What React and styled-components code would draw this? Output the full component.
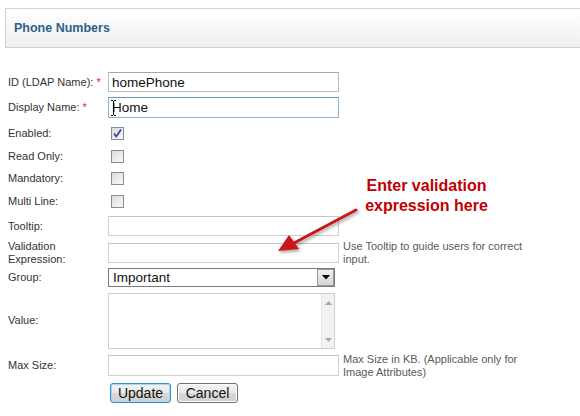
import React from 'react';
import styled, { createGlobalStyle } from 'styled-components';

const Global = createGlobalStyle`
  html, body { margin: 0; padding: 0; background: #fff; }
  body { font-family: "Liberation Sans", Arial, sans-serif; }
`;

function App() {
  return (
    <Page>
      <Global />
      <Header>
        <Title>Phone Numbers</Title>
      </Header>
      <Form>
        <Row $h={24}>
          <Label>ID (LDAP Name): <Req>*</Req></Label>
          <TextInput $w={231} $h={20} defaultValue="homePhone" $dark />
        </Row>
        <Row $h={27}>
          <Label>Display Name: <Req>*</Req></Label>
          <FieldWrap>
            <TextInput $w={231} $h={21} defaultValue="Home" $focus />
            <Cursor viewBox="0 0 5 16" width="5" height="16">
              <path d="M0 0.5h2M3 0.5h2M2.5 1v14M0 15.5h2M3 15.5h2" stroke="#000" strokeWidth="1" fill="none" />
            </Cursor>
          </FieldWrap>
        </Row>
        <Row $h={24}>
          <Label>Enabled:</Label>
          <Check $on>
            <svg viewBox="0 0 11 11" width="11" height="11">
              <path d="M2 5.5l2.3 3L9 1.5" stroke="#3a4f93" strokeWidth="1.8" fill="none" />
            </svg>
          </Check>
        </Row>
        <Row $h={22}>
          <Label>Read Only:</Label>
          <Check />
        </Row>
        <Row $h={23}>
          <Label>Mandatory:</Label>
          <Check />
        </Row>
        <Row $h={22}>
          <Label>Multi Line:</Label>
          <Check />
        </Row>
        <Row $h={28}>
          <Label>Tooltip:</Label>
          <TextInput $w={231} $h={20} />
        </Row>
        <Row $h={25}>
          <Label>Validation<br />Expression:</Label>
          <TextInput $w={231} $h={20} />
          <Help>Use Tooltip to guide users for correct<br />input.</Help>
        </Row>
        <Row $h={25}>
          <Label>Group:</Label>
          <Select>
            <SelectText>Important</SelectText>
            <DropButton>
              <svg viewBox="0 0 8 5" width="8" height="5">
                <path d="M0 0h8L4 4.5z" fill="#000" />
              </svg>
            </DropButton>
          </Select>
        </Row>
        <Row $h={61}>
          <Label>Value:</Label>
          <TextArea>
            <ScrollBar>
              <svg viewBox="0 0 7 4" width="7" height="4">
                <path d="M0 4h7L3.5 0z" fill="#a8a8a8" />
              </svg>
              <svg viewBox="0 0 7 4" width="7" height="4">
                <path d="M0 0h7L3.5 4z" fill="#a8a8a8" />
              </svg>
            </ScrollBar>
          </TextArea>
        </Row>
        <Row $h={29}>
          <Label>Max Size:</Label>
          <TextInput $w={231} $h={21} />
          <Help>Max Size in KB. (Applicable only for<br />Image Attributes)</Help>
        </Row>
        <Row $h={26}>
          <Label />
          <Buttons>
            <Button $primary>Update</Button>
            <Button>Cancel</Button>
          </Buttons>
        </Row>
      </Form>

      <Note>Enter validation<br />expression here</Note>
      <Arrow viewBox="0 0 90 60" width="90" height="60">
        <defs>
          <filter id="sh" x="-30%" y="-30%" width="160%" height="160%">
            <feDropShadow dx="1.5" dy="2" stdDeviation="1.5" floodColor="#000" floodOpacity="0.35" />
          </filter>
        </defs>
        <g filter="url(#sh)">
          <path d="M84 11L22 44" stroke="#c8181a" strokeWidth="3" strokeLinecap="round" fill="none" />
          <path d="M6 52L17 36L27 50z" fill="#c8181a" />
        </g>
      </Arrow>
    </Page>
  );
}

const Page = styled.div`
  position: relative;
  width: 580px;
  height: 416px;
  overflow: hidden;
  background: #fff;
`;

const Header = styled.div`
  margin: 8px 0 0 5px;
  width: 600px;
  height: 38px;
  border: 1px solid #d2d2d2;
  background: linear-gradient(#ffffff, #efefef);
  display: flex;
  align-items: center;
  padding-left: 8px;
  box-sizing: content-box;
`;

const Title = styled.h2`
  margin: 0;
  padding-bottom: 1px;
  font-size: 12.5px;
  font-weight: bold;
  color: #2f5f8c;
`;

const Form = styled.div`
  display: flex;
  flex-direction: column;
  padding-left: 8px;
  padding-top: 22px;
`;

const Row = styled.div`
  height: ${(p) => p.$h}px;
  display: flex;
  align-items: center;
`;

const Label = styled.div`
  width: 100px;
  flex: none;
  font-size: 11px;
  line-height: 13px;
  white-space: nowrap;
  color: #333;
`;

const Req = styled.span`
  color: #e0201c;
`;

const FieldWrap = styled.div`
  position: relative;
  display: flex;
`;

const Cursor = styled.svg`
  position: absolute;
  left: 3px;
  top: 3px;
`;

const TextInput = styled.input`
  box-sizing: border-box;
  width: ${(p) => p.$w}px;
  height: ${(p) => p.$h}px;
  margin: 0;
  padding: 0 3px;
  border: 1px solid ${(p) => (p.$focus ? '#8cb0d6' : p.$dark ? '#bcbcbc' : '#d0d0d0')};
  border-top-color: ${(p) => (p.$focus ? '#6d95c2' : p.$dark ? '#a8a8a8' : '#c4c4c4')};
  font-family: "Liberation Sans", Arial, sans-serif;
  font-size: 13.5px;
  color: #111;
  background: #fff;
  outline: none;
`;

const Check = styled.span`
  box-sizing: border-box;
  width: 13px;
  height: 13px;
  margin-left: 3px;
  border: 1px solid ${(p) => (p.$on ? '#8a8a9a' : '#8c8c8c')};
  background: linear-gradient(135deg, #dcdcdc, #f8f8f8);
  display: flex;
  align-items: center;
  justify-content: center;
`;

const Help = styled.div`
  margin-left: 4px;
  font-size: 11px;
  line-height: 13px;
  color: #5a5a5a;
`;

const Select = styled.div`
  box-sizing: border-box;
  width: 227px;
  height: 19px;
  border: 1px solid #7a7a7a;
  display: flex;
  align-items: center;
  justify-content: space-between;
  background: #fff;
`;

const SelectText = styled.span`
  padding-left: 4px;
  font-size: 13.5px;
  color: #111;
`;

const DropButton = styled.span`
  box-sizing: border-box;
  width: 17px;
  height: 17px;
  border: 1px solid #9a9a9a;
  background: linear-gradient(#f0f0f0, #d4d4d4);
  display: flex;
  align-items: center;
  justify-content: center;
`;

const TextArea = styled.div`
  box-sizing: border-box;
  width: 227px;
  height: 56px;
  border: 1px solid #cfcfcf;
  display: flex;
  justify-content: flex-end;
  background: #fff;
`;

const ScrollBar = styled.div`
  width: 12px;
  background: #f2f2f2;
  border-left: 1px solid #e6e6e6;
  display: flex;
  flex-direction: column;
  justify-content: space-between;
  align-items: center;
  padding: 7px 0 6px;
`;

const Buttons = styled.div`
  display: flex;
  gap: 6px;
  padding-left: 2px;
`;

const Button = styled.button`
  box-sizing: border-box;
  width: 61px;
  height: 20px;
  margin: 0;
  padding: 0;
  border: 1px solid ${(p) => (p.$primary ? '#3a8ec6' : '#707070')};
  box-shadow: ${(p) => (p.$primary ? 'inset 0 0 0 1px #a8d8f0' : 'inset 0 0 0 1px #fcfcfc')};
  border-radius: 3px;
  background: linear-gradient(#f4f4f4 0%, #e8e8e8 50%, #d8d8d8 51%, #d0d0d0 100%);
  font-family: "Liberation Sans", Arial, sans-serif;
  font-size: 14px;
  color: #111;
`;

const Note = styled.div`
  position: absolute;
  left: 360px;
  top: 176px;
  width: 133px;
  text-align: center;
  font-size: 16px;
  line-height: 20px;
  font-weight: bold;
  color: #c00000;
`;

const Arrow = styled.svg`
  position: absolute;
  left: 272px;
  top: 199px;
`;

export default App;
